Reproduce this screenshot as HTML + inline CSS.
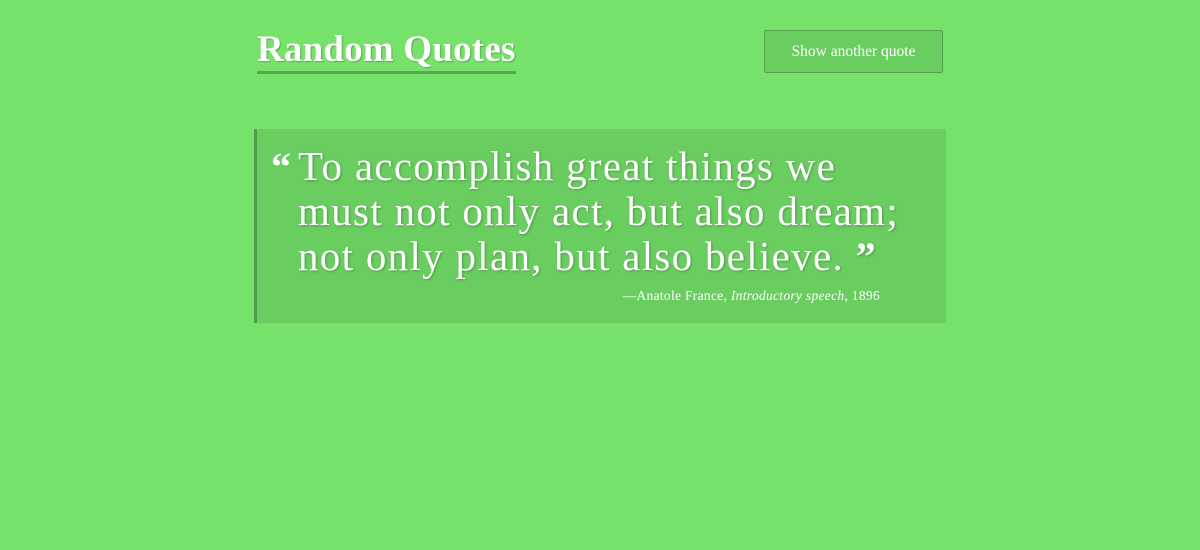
<!DOCTYPE html>
<html><head><meta charset="utf-8"><style>
body{margin:0;background:#77e26b;width:1200px;height:550px;overflow:hidden;font-family:"Liberation Serif",serif;color:#fff}
.title{position:absolute;left:257px;top:29px;font-size:37px;font-weight:bold;line-height:42px;border-bottom:3px solid #56a84e;text-shadow:1px 1px 1px rgba(0,0,0,.25);letter-spacing:0.2px}
.btn{position:absolute;left:764px;top:30px;width:177px;height:41px;background:#6acd60;border:1px solid #52a44b;border-radius:2px;font-size:15.5px;line-height:41px;text-align:center;box-sizing:content-box}
.box{position:absolute;left:254px;top:129px;width:689px;height:194px;background:#6acd60;border-left:3px solid #4e9e47;border-radius:0 2px 2px 0}
.q{position:absolute;left:41px;top:15px;font-size:41px;line-height:45px;letter-spacing:1.3px;text-shadow:1px 1px 2px rgba(0,0,0,.25);white-space:nowrap}
.lq{position:absolute;left:14px;top:15px;font-size:40px;font-weight:bold;line-height:45px}
.rq{font-weight:bold;font-size:40px}
.by{position:absolute;right:66px;top:159px;font-size:13.5px;letter-spacing:0.3px}
</style></head><body>
<div class="title">Random Quotes</div>
<div class="btn">Show another quote</div>
<div class="box">
<div class="lq">“</div>
<div class="q">To accomplish great things we<br>must not only act, but also dream;<br>not only plan, but also believe. <span class="rq">”</span></div>
<div class="by">—Anatole France, <i>Introductory speech</i>, 1896</div>
</div>
</body></html>
